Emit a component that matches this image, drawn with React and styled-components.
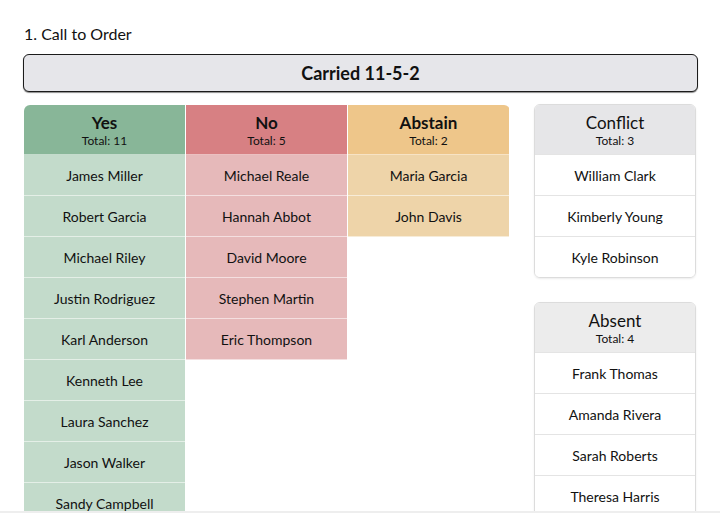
import React from 'react';
import styled, { createGlobalStyle } from 'styled-components';

const votes = [
  {
    key: 'yes',
    title: 'Yes',
    head: '#88b698',
    cell: '#c3dbcb',
    names: ['James Miller', 'Robert Garcia', 'Michael Riley', 'Justin Rodriguez', 'Karl Anderson', 'Kenneth Lee', 'Laura Sanchez', 'Jason Walker', 'Sandy Campbell', 'Paul Young', 'Lisa Hall'],
  },
  {
    key: 'no',
    title: 'No',
    head: '#d78083',
    cell: '#e6b9ba',
    names: ['Michael Reale', 'Hannah Abbot', 'David Moore', 'Stephen Martin', 'Eric Thompson'],
  },
  {
    key: 'abstain',
    title: 'Abstain',
    head: '#eec68a',
    cell: '#eed4a9',
    names: ['Maria Garcia', 'John Davis'],
  },
];

const others = [
  { key: 'conflict', title: 'Conflict', head: '#e6e6e8', names: ['William Clark', 'Kimberly Young', 'Kyle Robinson'] },
  { key: 'absent', title: 'Absent', head: '#ececec', names: ['Frank Thomas', 'Amanda Rivera', 'Sarah Roberts', 'Theresa Harris'] },
];

export default function App() {
  return (
    <Page>
      <GlobalStyle />
      <ItemTitle>1. Call to Order</ItemTitle>
      <Result>Carried 11-5-2</Result>
      <Board>
        <VoteTable>
          {votes.map(v => (
            <VoteColumn key={v.key}>
              <Header $bg={v.head}>
                <HeadTitle $size={17} $weight={700}>{v.title}</HeadTitle>
                <HeadTotal>Total: {v.names.length}</HeadTotal>
              </Header>
              {v.names.map(n => (
                <VoteCell key={n} $bg={v.cell}>{n}</VoteCell>
              ))}
            </VoteColumn>
          ))}
        </VoteTable>
        <Side>
          {others.map(o => (
            <Card key={o.key}>
              <Header $bg={o.head} $card>
                <HeadTitle $size={17} $weight={400}>{o.title}</HeadTitle>
                <HeadTotal>Total: {o.names.length}</HeadTotal>
              </Header>
              {o.names.map(n => (
                <CardRow key={n}>{n}</CardRow>
              ))}
            </Card>
          ))}
        </Side>
      </Board>
    </Page>
  );
}

const GlobalStyle = createGlobalStyle`
  html, body {
    margin: 0;
    padding: 0;
    background: #fff;
  }
  body {
    font-family: Lato, "Open Sans", sans-serif;
    color: #111;
  }
`;

const Page = styled.div`
  box-sizing: border-box;
  height: 513px;
  overflow: hidden;
  padding: 24px 23px 0 23px;
  border-bottom: 2px solid #eeeeee;
`;

const ItemTitle = styled.div`
  font-size: 16px;
  line-height: 20px;
  padding-left: 1px;
`;

const Result = styled.div`
  margin-top: 10px;
  height: 38px;
  box-sizing: border-box;
  display: flex;
  align-items: center;
  justify-content: center;
  background: #e6e6ea;
  border: 1px solid #1b1b1b;
  border-radius: 6px;
  box-shadow: 0 1px 1px rgba(0, 0, 0, 0.45);
  font-size: 18px;
  font-weight: 700;
  width: 675px;
`;

const Board = styled.div`
  display: flex;
  align-items: flex-start;
  gap: 24px;
  margin-top: 12px;
  padding-left: 1px;
`;

const VoteTable = styled.div`
  display: grid;
  grid-template-columns: repeat(3, 162px);
  align-items: start;
  margin-top: 1px;
  border-radius: 6px 6px 0 0;
  overflow: hidden;
`;

const VoteColumn = styled.div`
  display: flex;
  flex-direction: column;
  border-right: 1px solid rgba(255, 255, 255, 0.55);
`;

const Header = styled.div`
  height: ${p => (p.$card ? 49 : 50)}px;
  box-sizing: border-box;
  display: flex;
  flex-direction: column;
  align-items: center;
  justify-content: center;
  background: ${p => p.$bg};
  border-bottom: ${p => (p.$card ? 'none' : '1px solid rgba(255, 255, 255, 0.5)')};
`;

const HeadTitle = styled.div`
  font-size: ${p => p.$size}px;
  font-weight: ${p => p.$weight};
  line-height: 21px;
`;

const HeadTotal = styled.div`
  font-size: 12px;
  line-height: 15px;
`;

const VoteCell = styled.div`
  height: 41px;
  box-sizing: border-box;
  display: flex;
  align-items: center;
  justify-content: center;
  background: ${p => p.$bg};
  border-bottom: 1px solid rgba(255, 255, 255, 0.55);
  font-size: 14px;
`;

const Side = styled.div`
  width: 162px;
  display: flex;
  flex-direction: column;
  gap: 24px;
`;

const Card = styled.div`
  border: 1px solid #dcdcdc;
  border-radius: 6px;
  overflow: hidden;
  box-shadow: 0 1px 2px rgba(0, 0, 0, 0.08);
`;

const CardRow = styled.div`
  height: 41px;
  box-sizing: border-box;
  display: flex;
  align-items: center;
  justify-content: center;
  background: #fff;
  border-top: 1px solid #e4e4e4;
  font-size: 14px;
`;
